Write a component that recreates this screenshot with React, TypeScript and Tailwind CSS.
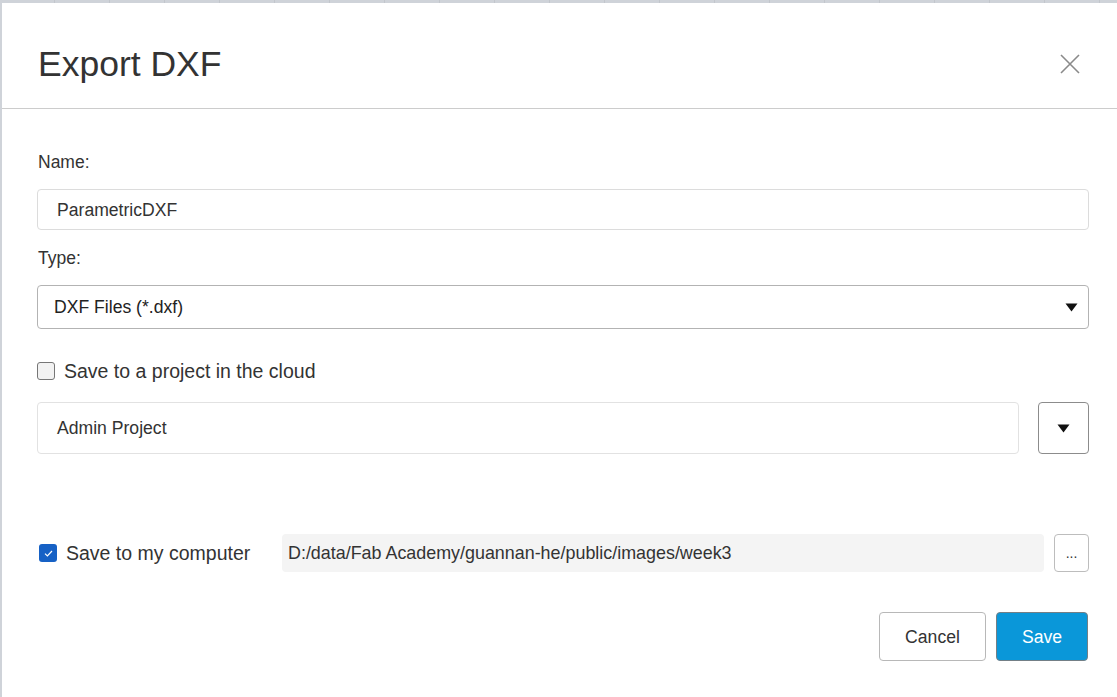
// Export DXF dialog

const FONT = { fontFamily: '"Liberation Sans", Arial, sans-serif' };

function Caret() {
  return (
    <svg width="13" height="9" viewBox="0 0 13 9">
      <path d="M0.5 0.5 H12.5 L6.5 8.5 Z" fill="#111" />
    </svg>
  );
}

export default function App() {
  const cells = Array.from({ length: 21 });

  return (
    <div className="w-[1117px] h-[697px] overflow-hidden bg-[#cfd3d9] flex flex-col text-[#333]" style={FONT}>
      {/* app behind the dialog */}
      <div className="h-[3px] flex shrink-0">
        {cells.map((_, i) => (
          <div key={i} className="w-[55px] shrink-0 border-r border-[#c2c6cc]" />
        ))}
      </div>

      <div className="flex-1 flex">
        <div className="w-[2px] shrink-0" />

        <div className="flex-1 bg-white flex flex-col">
          {/* Header */}
          <div className="flex items-center pl-[36px] pr-[37px] pt-[41px] pb-[24px] border-b border-[#cccccc]">
            <h1 className="text-[35.5px] leading-[40px] text-[#333]">Export DXF</h1>
            <button className="ml-auto w-[20px] h-[20px]">
              <svg width="20" height="20" viewBox="0 0 20 20">
                <path d="M1 1 L19 19 M19 1 L1 19" stroke="#8a8a8a" strokeWidth="1.6" />
              </svg>
            </button>
          </div>

          {/* Body */}
          <div className="pl-[35px] pr-[28px] pt-[41px]">
            <div className="text-[17.5px] leading-[24px] pl-[1px]">Name:</div>
            <div className="mt-[15px] h-[41px] border border-[#dcdcdc] rounded-[4px] pl-[19px] pt-[1px] flex items-center text-[17.6px]">
              ParametricDXF
            </div>

            <div className="mt-[16px] text-[17.5px] leading-[24px] pl-[1px]">Type:</div>
            <div className="mt-[15px] h-[44px] border border-[#b3b3b3] rounded-[4px] pl-[16px] pr-[10px] flex items-center justify-between text-[17.6px] text-[#222]">
              <span className="pt-[1px]">DXF Files (*.dxf)</span>
              <Caret />
            </div>

            <label className="mt-[30px] h-[24px] flex items-center">
              <span className="w-[18px] h-[18px] rounded-[3px] border-[1.5px] border-[#767676] bg-[#f2f2f2]" />
              <span className="ml-[9px] text-[19.5px] pt-[1px]">Save to a project in the cloud</span>
            </label>

            <div className="mt-[19px] flex">
              <div className="flex-1 h-[52px] border border-[#e2e2e2] rounded-[4px] pl-[19px] pt-[1px] flex items-center text-[17.6px]">
                Admin Project
              </div>
              <button className="ml-[19px] w-[51px] h-[52px] border border-[#8c8c8c] rounded-[4px] flex items-center justify-center">
                <Caret />
              </button>
            </div>

            <div className="mt-[80px] h-[38px] flex items-center">
              <div className="w-[245px] shrink-0 flex items-center">
                <span className="ml-[2px] w-[18px] h-[18px] rounded-[3px] bg-[#1661c5] flex items-center justify-center">
                  <svg width="9" height="7" viewBox="0 0 9 7">
                    <path d="M1 3.6 L3.4 6 L8 1" stroke="#fff" strokeWidth="1.2" fill="none" />
                  </svg>
                </span>
                <span className="ml-[9px] text-[19.5px] pt-[1px]">Save to my computer</span>
              </div>
              <div className="flex-1 h-[38px] bg-[#f4f4f4] rounded-[4px] pl-[6px] pt-[1px] flex items-center text-[17.9px]">
                D:/data/Fab Academy/guannan-he/public/images/week3
              </div>
              <button className="ml-[10px] w-[35px] h-[38px] border border-[#bdbdbd] rounded-[4px] text-[14px] leading-none">
                ...
              </button>
            </div>

            <div className="mt-[40px] flex justify-end gap-[10px] pr-[1px]">
              <button className="w-[107px] h-[49px] pt-[2px] border border-[#b8b8b8] rounded-[4px] bg-white text-[17.6px] text-[#333]">
                Cancel
              </button>
              <button className="w-[92px] h-[49px] pt-[2px] border border-[#737f86] rounded-[4px] bg-[#0a97d9] text-[17.6px] text-white">
                Save
              </button>
            </div>
          </div>
        </div>
      </div>
    </div>
  );
}
